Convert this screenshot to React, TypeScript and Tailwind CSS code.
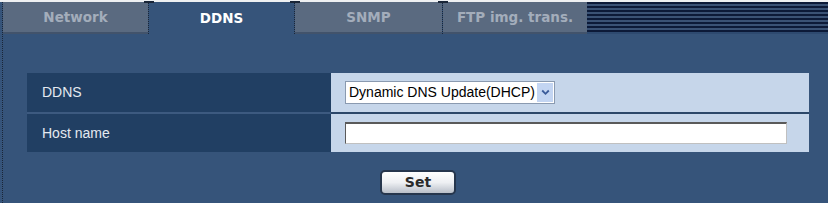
import React from "react";

const tabs = [
  { label: "Network", w: "w-[145px]", active: false },
  { label: "DDNS", w: "w-[145px]", active: true },
  { label: "SNMP", w: "w-[147px]", active: false },
  { label: "FTP img. trans.", w: "w-[144px]", active: false },
];

function Divider() {
  return (
    <div className="relative w-[1px] self-stretch border-l border-dotted border-[#1a2638]">
      <div className="absolute -top-[1px] left-[-5px] h-[2px] w-[10px] bg-[#1a2638]" />
    </div>
  );
}

export default function App() {
  return (
    <div className="w-[828px] h-[203px] overflow-hidden bg-[#36547a] font-['Liberation_Sans',Arial,sans-serif]">
      <div className="h-[2px] bg-[#eef0f2]" />
      <div className="ml-[2px] flex h-[201px] flex-col border-l border-dotted border-[#1a2638]">
        {/* tab bar */}
        <div className="flex h-[32px] items-stretch">
          {tabs.map((t, i) => (
            <React.Fragment key={t.label}>
              {i > 0 && <Divider />}
              <div
                className={
                  t.active
                    ? `${t.w} flex items-center justify-center bg-[#36547a] pt-[1px] text-[13.5px] font-bold text-white font-['DejaVu_Sans',Verdana,sans-serif]`
                    : `${t.w} flex items-center justify-center border-b-2 border-[#42536b] bg-[#5a6a80] pt-[1px] text-[13.5px] font-bold text-[#a3adbb] font-['DejaVu_Sans',Verdana,sans-serif]`
                }
              >
                {t.label}
              </div>
            </React.Fragment>
          ))}
          <div className="flex-1 border-b-2 border-[#2e4a70] bg-[repeating-linear-gradient(to_bottom,#0c1a38_0px,#0c1a38_2px,#3a5275_2px,#3a5275_4px)]" />
        </div>

        {/* content */}
        <div className="flex flex-1 flex-col pl-[24px] pr-[19px] pt-[39px]">
          <div className="flex flex-col">
            <div className="flex h-[41px]">
              <div className="flex w-[304px] items-center border-b-2 border-[#3d5a80] bg-[#213f63] pl-[15px] text-[14px] text-[#e4e9f0]">
                DDNS
              </div>
              <div className="flex flex-1 items-center border-b-2 border-[#2c4769] bg-[#c6d6ea] pl-[14px]">
                <div className="flex h-[23px] w-[210px] items-center border border-[#8a9ab0] bg-white">
                  <span className="flex-1 pl-[3px] text-[14px] text-black">Dynamic DNS Update(DHCP)</span>
                  <div className="mr-[1px] flex h-[19px] w-[16px] items-center justify-center bg-[#c3d5f2]">
                    <svg width="9" height="7" viewBox="0 0 9 7">
                      <path d="M1.2 1.5 L4.5 4.8 L7.8 1.5" stroke="#3a5b9a" strokeWidth="1.8" fill="none" />
                    </svg>
                  </div>
                </div>
              </div>
            </div>
            <div className="flex h-[38px]">
              <div className="flex w-[304px] items-center bg-[#213f63] pl-[15px] text-[14px] text-[#e4e9f0]">
                Host name
              </div>
              <div className="flex flex-1 items-center bg-[#c6d6ea] pl-[14px]">
                <div className="h-[22px] w-[442px] border border-t-2 border-[#c0c0c0] border-t-[#5a5a5a] border-l-[#5a5a5a] bg-white" />
              </div>
            </div>
          </div>
          <div className="mt-[18px] flex justify-center">
            <button className="flex h-[25px] w-[76px] items-center justify-center rounded-[5px] border-2 border-[#26364d] bg-gradient-to-b from-[#ffffff] via-[#eef0f3] to-[#b9bfc9] text-[14px] font-bold text-[#2a2a2a] font-['DejaVu_Sans',Verdana,sans-serif]">
              Set
            </button>
          </div>
        </div>
      </div>
    </div>
  );
}
